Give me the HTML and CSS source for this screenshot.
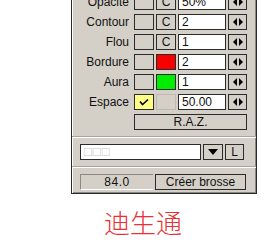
FILE: index.html
```html
<!doctype html>
<html>
<head>
    <meta charset="utf-8">
    <link rel="stylesheet" href="styles.css">
</head>
<body>
    <div class="panel">
        <div class="rows">
            <span class="lbl">Opacité</span>
            <span class="box"></span>
            <span class="box btn">C</span>
            <span class="field">50%</span>
            <span class="box spin"><svg width="10" height="8" viewBox="0 0 10 8"><polygon points="4,0 4,8 0,4"/><polygon points="6,0 6,8 10,4"/></svg></span>

            <span class="lbl">Contour</span>
            <span class="box"></span>
            <span class="box btn">C</span>
            <span class="field">2</span>
            <span class="box spin"><svg width="10" height="8" viewBox="0 0 10 8"><polygon points="4,0 4,8 0,4"/><polygon points="6,0 6,8 10,4"/></svg></span>

            <span class="lbl">Flou</span>
            <span class="box"></span>
            <span class="box btn">C</span>
            <span class="field">1</span>
            <span class="box spin"><svg width="10" height="8" viewBox="0 0 10 8"><polygon points="4,0 4,8 0,4"/><polygon points="6,0 6,8 10,4"/></svg></span>

            <span class="lbl">Bordure</span>
            <span class="box"></span>
            <span class="box red"></span>
            <span class="field">2</span>
            <span class="box spin"><svg width="10" height="8" viewBox="0 0 10 8"><polygon points="4,0 4,8 0,4"/><polygon points="6,0 6,8 10,4"/></svg></span>

            <span class="lbl">Aura</span>
            <span class="box"></span>
            <span class="box green"></span>
            <span class="field">1</span>
            <span class="box spin"><svg width="10" height="8" viewBox="0 0 10 8"><polygon points="4,0 4,8 0,4"/><polygon points="6,0 6,8 10,4"/></svg></span>

            <span class="lbl">Espace</span>
            <span class="box check"><svg width="10" height="8" viewBox="0 0 10 8"><polyline points="1,3.5 3.5,6.5 9,1.5" fill="none" stroke="#000" stroke-width="1.6"/></svg></span>
            <span class="box off"></span>
            <span class="field">50.00</span>
            <span class="box spin"><svg width="10" height="8" viewBox="0 0 10 8"><polygon points="4,0 4,8 0,4"/><polygon points="6,0 6,8 10,4"/></svg></span>

            <span class="box raz">R.A.Z.</span>
        </div>

        <div class="sep"></div>

        <div class="line">
            <span class="field name">□□□</span>
            <span class="box drop"><svg width="10" height="6" viewBox="0 0 10 6"><polygon points="0,0 10,0 5,6"/></svg></span>
            <span class="box btn l">L</span>
        </div>

        <div class="sep"></div>

        <div class="line">
            <span class="size">84.0</span>
            <span class="box create">Créer brosse</span>
        </div>
    </div>

    <div class="brand">迪生通</div>
</body>
</html>
```

FILE: styles.css
```css
* {
    margin: 0;
    padding: 0;
    box-sizing: border-box;
}
body {
    background: #fff;
    font-family: "Liberation Sans", Arial, sans-serif;
    font-size: 12px;
    color: #111;
}
.panel {
    width: 186px;
    margin: -12px 0 0 71px;
    background: #d4d0c8;
    border: 1px solid #2b2b2b;
    box-shadow: inset 1px 1px 0 #fff, inset -1px -1px 0 #8c8880;
    padding: 5px 0 3px 0;
}
.rows {
    display: grid;
    grid-template-columns: 1fr 20px 20px 48px 19px;
    grid-auto-rows: 16px;
    column-gap: 2px;
    row-gap: 4px;
    padding-right: 9px;
}
.lbl {
    text-align: right;
    padding-right: 3px;
    line-height: 16px;
}
.box {
    border: 1px solid #2b2b2b;
    background: #d4d0c8;
    display: flex;
    align-items: center;
    justify-content: center;
    height: 16px;
    line-height: 14px;
}
.field {
    border: 1px solid #2b2b2b;
    background: #fff;
    height: 16px;
    line-height: 14px;
    padding-left: 3px;
}
.red { background: #f80000; }
.green { background: #00ec00; }
.check { background: #ffff88; }
.off {
    border-color: #bdb9b1;
}
.spin svg, .drop svg { fill: #000; }
.raz {
    grid-column: 2 / 6;
}
.sep {
    margin: 6px 0 6px 0;
    border-top: 1px solid #a8a49c;
    border-bottom: 1px solid #fff;
}
.line {
    display: flex;
    gap: 2px;
    padding-left: 8px;
    height: 16px;
}
.name {
    width: 121px;
    color: #c4c4c4;
    font-size: 13px;
    letter-spacing: 1px;
}
.drop { width: 20px; }
.l { width: 19px; }
.size {
    width: 73px;
    height: 16px;
    line-height: 15px;
    text-align: center;
    border-top: 1px solid #8c8880;
    border-left: 1px solid #8c8880;
    border-bottom: 1px solid #fff;
    letter-spacing: 0.5px;
}
.create { width: 91px; }
.brand {
    margin: 15px 0 0 104px;
    font-family: "Noto Sans CJK SC", sans-serif;
    font-size: 26px;
    line-height: 26px;
    font-weight: 300;
    color: #ea3034;
}
```
